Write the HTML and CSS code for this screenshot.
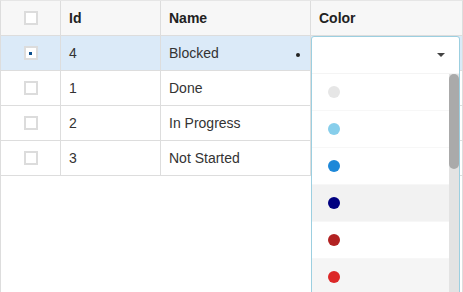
FILE: index.html
```html
<!DOCTYPE html>
<html lang="en">
<head>
    <meta charset="UTF-8">
    <title>Statuses</title>
    <link rel="stylesheet" href="styles.css">
</head>
<body>
    <div class="grid">
        <div class="row header">
            <div class="cell check"><span class="box"></span></div>
            <div class="cell">Id</div>
            <div class="cell">Name</div>
            <div class="cell">Color</div>
        </div>
        <div class="row selected">
            <div class="cell check"><span class="box on"></span></div>
            <div class="cell">4</div>
            <div class="cell name">Blocked<span class="mark"></span></div>
            <div class="cell editor">
                <div class="dropdown">
                    <div class="select"><span class="caret"></span></div>
                    <div class="list">
                        <div class="options">
                            <div class="option"><span class="dot" style="background:#e6e6e6"></span></div>
                            <div class="option"><span class="dot" style="background:#87ceeb"></span></div>
                            <div class="option"><span class="dot" style="background:#1e88d8"></span></div>
                            <div class="option hover"><span class="dot" style="background:#000080"></span></div>
                            <div class="option"><span class="dot" style="background:#b22222"></span></div>
                            <div class="option alt"><span class="dot" style="background:#dc2828"></span></div>
                        </div>
                        <div class="scrollbar"><span class="thumb"></span></div>
                    </div>
                </div>
            </div>
        </div>
        <div class="row">
            <div class="cell check"><span class="box"></span></div>
            <div class="cell">1</div>
            <div class="cell">Done</div>
            <div class="cell"></div>
        </div>
        <div class="row">
            <div class="cell check"><span class="box"></span></div>
            <div class="cell">2</div>
            <div class="cell">In Progress</div>
            <div class="cell"></div>
        </div>
        <div class="row">
            <div class="cell check"><span class="box"></span></div>
            <div class="cell">3</div>
            <div class="cell">Not Started</div>
            <div class="cell"></div>
        </div>
    </div>
</body>
</html>
```

FILE: styles.css
```css
body {
    margin: 0;
    font-family: "Liberation Sans", Arial, sans-serif;
    font-size: 14px;
    color: #333;
    background: #fff;
    overflow: hidden;
}

.grid {
    width: 463px;
    height: 292px;
    box-sizing: border-box;
    border: 1px solid #ddd;
    border-bottom: none;
    border-top-color: #e6e6e6;
}

.row {
    display: grid;
    grid-template-columns: 60px 100px 150px 1fr;
    height: 35px;
    box-sizing: border-box;
    border-bottom: 1px solid #ddd;
}

.header {
    background: #f7f7f7;
    font-weight: bold;
    color: #222;
}

.selected {
    background: #dbeaf8;
}

.cell {
    display: flex;
    align-items: center;
    padding-left: 8px;
    border-right: 1px solid #ddd;
    position: relative;
}

.cell:last-child {
    border-right: none;
}

.check {
    justify-content: center;
    padding-left: 0;
}

.box {
    width: 10px;
    height: 10px;
    border: 2px solid #dcdcdc;
    background: #fff;
    display: flex;
    align-items: center;
    justify-content: center;
}

.box.on::after {
    content: "";
    width: 3px;
    height: 3px;
    background: #0b4f8f;
}

.name .mark {
    position: absolute;
    left: 135px;
    top: 17px;
    width: 4px;
    height: 4px;
    border-radius: 50%;
    background: #222;
}

.editor {
    padding-left: 0;
}

.dropdown {
    position: absolute;
    left: 0;
    top: 0;
    width: 149px;
    height: 260px;
    box-sizing: border-box;
    border: 1px solid #9ccfe0;
    border-radius: 3px 3px 0 0;
    background: #fff;
    z-index: 2;
}

.select {
    height: 36px;
    border-bottom: 1px solid #f4f4f4;
    position: relative;
}

.caret {
    position: absolute;
    right: 14px;
    top: 16px;
    border-left: 4px solid transparent;
    border-right: 4px solid transparent;
    border-top: 4px solid #444;
}

.list {
    display: flex;
    height: 222px;
    overflow: hidden;
}

.options {
    flex: 1;
}

.option {
    height: 36px;
    border-bottom: 1px solid #f7f7f7;
    display: flex;
    align-items: center;
    padding-left: 16px;
}

.option.hover {
    background: #f2f2f2;
}

.option.alt {
    background: #f5f5f5;
}

.dot {
    width: 12px;
    height: 12px;
    border-radius: 50%;
}

.scrollbar {
    width: 10px;
    background: #e3e3e3;
}

.thumb {
    display: block;
    height: 95px;
    background: #aaa;
    border-radius: 5px;
}
```
